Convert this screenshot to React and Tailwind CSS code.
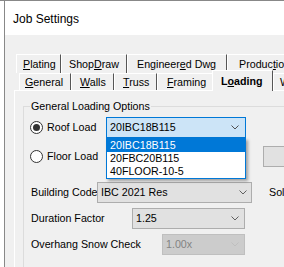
import React from 'react';

function Chevron({ color = '#606060' }) {
  return (
    <svg width="8" height="5" viewBox="0 0 8 5" className="shrink-0">
      <path d="M0.5 0.5 L4 4 L7.5 0.5" fill="none" stroke={color} strokeWidth="1" />
    </svg>
  );
}

function Combo({ className, value, disabled, chevronClass = 'mr-[5px]' }) {
  return (
    <div
      className={`relative h-[21px] flex items-center justify-between border pl-[3px] ${
        disabled ? 'bg-[#cccccc] border-[#bfbfbf] text-[#838383]' : 'bg-[#e1e1e1] border-[#adadad]'
      } ${className}`}
    >
      <span>{value}</span>
      <span className={chevronClass}>
        <Chevron color={disabled ? '#bfbfbf' : '#606060'} />
      </span>
    </div>
  );
}

function Radio({ checked }) {
  return (
    <span className="w-[13px] h-[13px] rounded-full border border-[#333] bg-white flex items-center justify-center shrink-0">
      {checked && <span className="w-[7px] h-[7px] rounded-full bg-[#333]" />}
    </span>
  );
}

function Tab({ className, children }) {
  return (
    <div
      className={`h-full flex items-center border-t border-l border-r border-t-white border-l-white border-r-[#555] shrink-0 whitespace-nowrap ${className}`}
    >
      {children}
    </div>
  );
}

export default function App() {
  return (
    <div
      className="w-[284px] h-[267px] overflow-hidden bg-white border-t border-[#888] flex text-[10.7px] text-black leading-[13px]"
      style={{ fontFamily: '"Liberation Sans", Arial, sans-serif' }}
    >
      <div className="w-[4px] shrink-0" />
      <div className="flex-1 min-w-0 border-l border-[#888] flex flex-col bg-[#f0f0f0]">
        {/* title bar */}
        <div className="h-[34px] shrink-0 bg-white pl-[8px] pt-[3px] flex items-center text-[12px]">
          Job Settings
        </div>

        {/* tabs */}
        <div className="pt-[19px] shrink-0">
          <div className="h-[19px] flex ml-[11px]">
            <Tab className="w-[45px] pl-[6px]"><span><u>P</u>lating</span></Tab>
            <Tab className="w-[66px] pl-[7px]"><span>Shop<u>D</u>raw</span></Tab>
            <Tab className="w-[100px] pl-[9px]"><span>Engineer<u>e</u>d Dwg</span></Tab>
            <Tab className="w-[100px] pl-[11px]"><span>Produc<u>t</u>ion</span></Tab>
          </div>
          <div className="h-[17px] flex items-end ml-[14px]">
            <Tab className="w-[52px] pl-[5px] pt-[1px]"><span><u>G</u>eneral</span></Tab>
            <Tab className="w-[43px] pl-[8px] pt-[1px]"><span><u>W</u>alls</span></Tab>
            <Tab className="w-[43px] pl-[8px] pt-[1px]"><span><u>T</u>russ</span></Tab>
            <Tab className="w-[55px] pl-[9px] pt-[1px] border-r-0"><span><u>F</u>raming</span></Tab>
            <div className="relative z-10 w-[61px] h-[21px] mb-[-1px] pl-[8px] flex items-center font-bold bg-[#f0f0f0] border-t border-l border-r border-t-white border-l-white border-r-[#555] shrink-0">
              <span>L<u>o</u>ading</span>
            </div>
            <Tab className="w-[60px] pl-[6px] pt-[1px]"><span>Wind</span></Tab>
          </div>
        </div>

        {/* tab panel */}
        <div className="flex-1 shrink-0 ml-[9px] border-t border-l border-white bg-[#f0f0f0]">
          <div className="ml-[8px] mt-[15px] border-t border-l border-[#dcdcdc] h-[200px]">
            <div className="-mt-[8px] ml-[6px] px-[1px] w-fit bg-[#f0f0f0] leading-[14px]">
              General Loading Options
            </div>

            {/* Roof load */}
            <div className="mt-[4px] h-[21px] flex items-center pl-[6px] whitespace-nowrap">
              <Radio checked />
              <span className="ml-[4px] w-[59px] shrink-0">Roof Load</span>
              <div className="relative z-20 w-[140px] h-[21px] shrink-0 flex items-center justify-between pl-[3px] border border-[#0078d7] bg-[#cce4f7]">
                <span>20IBC18B115</span>
                <span className="mr-[6px]"><Chevron color="#505050" /></span>
                <div className="absolute left-[-1px] top-[20px] w-[140px] border border-[#0078d7] bg-white shadow-[2px_2px_3px_rgba(0,0,0,0.35)]">
                  <div className="h-[13px] pl-[3px] flex items-center bg-[#0078d7] text-white">20IBC18B115</div>
                  <div className="h-[13px] pl-[3px] flex items-center">20FBC20B115</div>
                  <div className="h-[13px] pl-[3px] flex items-center">40FLOOR-10-5</div>
                </div>
              </div>
            </div>

            {/* Floor load */}
            <div className="mt-[8px] h-[21px] flex items-center pl-[6px] whitespace-nowrap">
              <Radio />
              <span className="ml-[4px] w-[59px] shrink-0">Floor Load</span>
              <div className="ml-[157px] w-[40px] h-[21px] shrink-0 bg-[#e1e1e1] border border-[#adadad]" />
            </div>

            {/* Building code */}
            <div className="mt-[15px] h-[21px] flex items-center pl-[7px] whitespace-nowrap">
              <span className="w-[66px] shrink-0">Building Code</span>
              <Combo className="w-[155px] shrink-0" value="IBC 2021 Res" chevronClass="mr-[4px]" />
              <span className="ml-[17px]">Soluti</span>
            </div>

            {/* Duration factor */}
            <div className="mt-[5px] h-[21px] flex items-center pl-[7px] whitespace-nowrap">
              <span className="w-[101px] shrink-0">Duration Factor</span>
              <Combo className="w-[113px] shrink-0" value="1.25" />
            </div>

            {/* Overhang snow check */}
            <div className="mt-[5px] h-[21px] flex items-center pl-[7px] whitespace-nowrap">
              <span className="w-[131px] shrink-0">Overhang Snow Check</span>
              <Combo className="w-[83px] shrink-0" value="1.00x" disabled />
            </div>
          </div>
        </div>
      </div>
    </div>
  );
}
